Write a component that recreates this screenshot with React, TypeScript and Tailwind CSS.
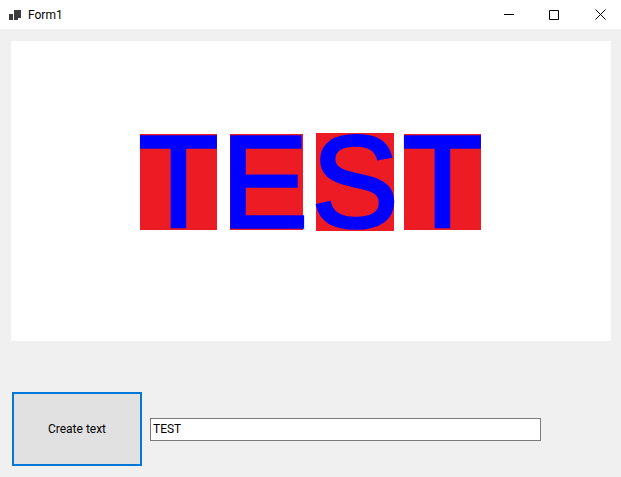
const letters = [
  { ch: "T", box: "w-[77px] h-[96px]", mr: "mr-[13px]" },
  { ch: "E", box: "w-[73px] h-[96px] pr-[4px]", mr: "mr-[13px]" },
  { ch: "S", box: "w-[78px] h-[98px]", mr: "mr-[10px]" },
  { ch: "T", box: "w-[77px] h-[96px]", mr: "" },
];

function AppIcon() {
  return (
    <svg width="12" height="10" viewBox="0 0 12 10" className="block">
      <path d="M0 4h4v6H0z" fill="#3c3c3c" />
      <path d="M5 0h7v8H9v2H5z" fill="#3c3c3c" />
    </svg>
  );
}

function WindowButtons() {
  return (
    <div className="-mr-[2px] flex h-full items-center">
      <div className="flex w-[45px] justify-center">
        <svg width="10" height="10" viewBox="0 0 10 10" className="block">
          <path d="M0 4.5h10" stroke="#000" fill="none" />
        </svg>
      </div>
      <div className="flex w-[46px] justify-center">
        <svg width="10" height="10" viewBox="0 0 10 10" className="block">
          <path d="M.5.5h9v9h-9z" stroke="#000" fill="none" />
        </svg>
      </div>
      <div className="flex w-[46px] justify-center">
        <svg width="11" height="11" viewBox="0 0 11 11" className="block">
          <path d="M.5.5l10 10M10.5.5l-10 10" stroke="#000" fill="none" />
        </svg>
      </div>
    </div>
  );
}

export default function App() {
  return (
    <div className="flex h-[477px] w-[621px] flex-col overflow-hidden bg-[#f0f0f0] font-['Roboto','Noto_Sans',sans-serif] text-[12px] text-black">
      <div className="flex h-[29px] items-center justify-between bg-white pl-[9px]">
        <div className="flex items-center gap-[7px]">
          <AppIcon />
          <span className="leading-none">Form1</span>
        </div>
        <WindowButtons />
      </div>

      <div className="ml-[11px] mt-[12px] flex h-[300px] w-[600px] items-center bg-white pb-[18px] pl-[129px]">
        {letters.map((l, i) => (
          <div
            key={i}
            className={`flex items-center justify-center bg-[#ed1c24] font-['Liberation_Sans',sans-serif] text-[130px] leading-[96px] text-[#0000ff] [-webkit-text-stroke:3.5px_#0000ff] ${l.box} ${l.mr}`}
          >
            {l.ch}
          </div>
        ))}
      </div>

      <div className="ml-[12px] mt-[51px] flex items-center">
        <button className="flex h-[74px] w-[130px] items-center justify-center border-[2px] border-[#0078d7] bg-[#e1e1e1]">
          Create text
        </button>
        <input
          readOnly
          value="TEST"
          className="ml-[8px] h-[23px] w-[391px] border border-[#7a7a7a] bg-white px-[2px] text-[12px] outline-none"
        />
      </div>
    </div>
  );
}
